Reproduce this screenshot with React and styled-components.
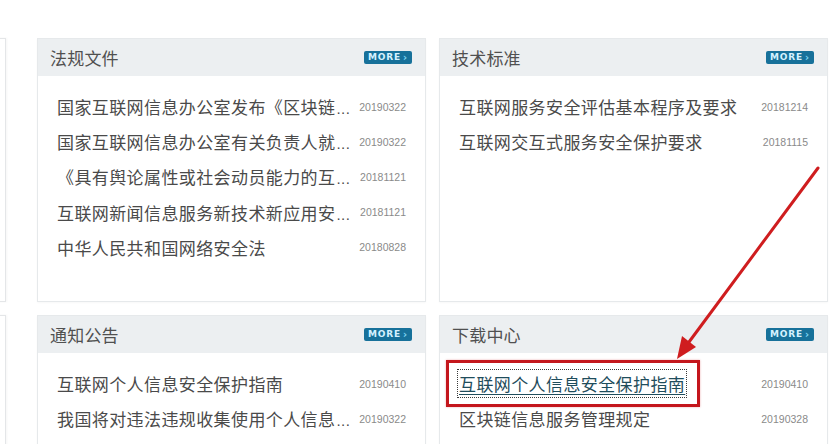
import styled, { createGlobalStyle } from "styled-components";

const GlobalStyle = createGlobalStyle`
  html, body {
    margin: 0;
    padding: 0;
    background: #ffffff;
    overflow: hidden;
  }
  body {
    font-family: "Noto Sans CJK SC", "Noto Sans", sans-serif;
  }
`;

const Page = styled.div`
  position: relative;
  width: 835px;
  height: 444px;
  overflow: hidden;
  display: flex;
  align-items: flex-start;
  gap: 31px;
  padding-top: 38px;
  box-sizing: border-box;
`;

const Sidebar = styled.div`
  margin-left: -200px;
  width: 206px;
  display: grid;
  grid-template-rows: 264px 264px;
  row-gap: 13px;
`;

const SideCard = styled.div`
  border: 1px solid #e4e6e8;
  background: #fff;
  box-shadow: 1px 0 2px rgba(0, 0, 0, 0.04);
`;

const Grid = styled.div`
  display: grid;
  grid-template-columns: 389px 389px;
  grid-template-rows: 264px 264px;
  gap: 13px;
`;

const Card = styled.section`
  background: #fff;
  border: 1px solid #e6e9eb;
  box-sizing: border-box;
  box-shadow: 0 1px 2px rgba(0, 0, 0, 0.03);
  display: flex;
  flex-direction: column;
`;

const Header = styled.header`
  height: 37px;
  flex: none;
  background: #eceff1;
  display: flex;
  align-items: center;
  justify-content: space-between;
  padding: 0 13px 0 12px;
`;

const Title = styled.h2`
  margin: 0;
  font-size: 17px;
  font-weight: 400;
  color: #505050;
  letter-spacing: 0.2px;
`;

const More = styled.span`
  width: 48px;
  height: 13px;
  border-radius: 2px;
  background: #17719a;
  color: #d4f1ff;
  font-family: "DejaVu Sans", sans-serif;
  font-size: 9px;
  font-weight: 700;
  letter-spacing: 0.8px;
  display: flex;
  align-items: center;
  justify-content: center;
  gap: 2px;
  line-height: 1;
`;

const Chevron = styled.span`
  color: #7fd6f5;
  font-size: 10px;
`;

const List = styled.ul`
  list-style: none;
  margin: 0;
  padding: 13px 19px 0 19px;
`;

const Row = styled.li`
  height: 35.2px;
  display: flex;
  align-items: center;
  justify-content: space-between;
  gap: 6px;
`;

const Name = styled.span`
  white-space: nowrap;
  font-size: 17px;
  color: #4a4a4a;
  letter-spacing: 0.4px;
`;

const Dots = styled.span`
  font-family: "Liberation Sans", Arial, sans-serif;
  font-size: 15px;
  letter-spacing: 0.5px;
  margin-left: 1px;
`;

const Link = styled.a`
  position: relative;
  font-size: 17px;
  color: #1f4d5c;
  text-decoration: underline;
  text-underline-offset: 3px;
  white-space: nowrap;
  outline: 1px dotted #3a3a3a;
  outline-offset: 1px;
  letter-spacing: 0.4px;

  &::after {
    content: "";
    position: absolute;
    inset: -11px -15px -11px -13px;
    border: 3.5px solid #c4161c;
    box-shadow: 0 0 2px rgba(196, 22, 28, 0.35);
  }
`;

const Date = styled.span`
  flex: none;
  width: 48px;
  text-align: right;
  font-family: "Liberation Sans", Arial, sans-serif;
  font-size: 10.5px;
  color: #8a8a8a;
`;

const Arrow = styled.svg`
  position: absolute;
  left: 0;
  top: 0;
  pointer-events: none;
`;

// [shown text, date, cut short, marked]
const panels = [
  {
    title: "法规文件",
    rows: [
      ["国家互联网信息办公室发布《区块链", "20190322", true],
      ["国家互联网信息办公室有关负责人就", "20190322", true],
      ["《具有舆论属性或社会动员能力的互", "20181121", true],
      ["互联网新闻信息服务新技术新应用安", "20181121", true],
      ["中华人民共和国网络安全法", "20180828"],
    ],
  },
  {
    title: "技术标准",
    rows: [
      ["互联网服务安全评估基本程序及要求", "20181214"],
      ["互联网交互式服务安全保护要求", "20181115"],
    ],
  },
  {
    title: "通知公告",
    rows: [
      ["互联网个人信息安全保护指南", "20190410"],
      ["我国将对违法违规收集使用个人信息", "20190322", true],
      ["关于发布《互联网个人信息安全保护", "20190311", true],
    ],
  },
  {
    title: "下载中心",
    rows: [
      ["互联网个人信息安全保护指南", "20190410", false, true],
      ["区块链信息服务管理规定", "20190328"],
      ["互联网新闻信息服务管理规定", "20181121"],
    ],
  },
];

function Panel({ title, rows }) {
  return (
    <Card>
      <Header>
        <Title>{title}</Title>
        <More>
          MORE<Chevron>›</Chevron>
        </More>
      </Header>
      <List>
        {rows.map(([name, date, cut, marked]) => (
          <Row key={name}>
            {marked ? (
              <Link href="#">{name}</Link>
            ) : (
              <Name>
                {name}
                {cut && <Dots>...</Dots>}
              </Name>
            )}
            <Date>{date}</Date>
          </Row>
        ))}
      </List>
    </Card>
  );
}

export default function App() {
  return (
    <>
      <GlobalStyle />
      <Page>
        <Sidebar>
          <SideCard />
          <SideCard />
        </Sidebar>
        <Grid>
          {panels.map((p) => (
            <Panel key={p.title} title={p.title} rows={p.rows} />
          ))}
        </Grid>
        <Arrow width="835" height="444" viewBox="0 0 835 444">
          <line
            x1="818"
            y1="168"
            x2="689"
            y2="342"
            stroke="#cf1d1f"
            strokeWidth="3"
            strokeLinecap="round"
          />
          <polygon points="677,359 696,347 682,336" fill="#cf1d1f" />
        </Arrow>
      </Page>
    </>
  );
}
